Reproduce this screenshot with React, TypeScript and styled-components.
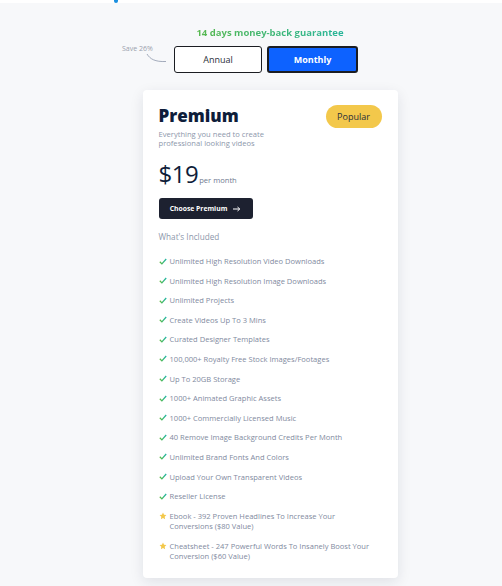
import React from "react";
import styled, { createGlobalStyle } from "styled-components";

const GlobalStyle = createGlobalStyle`
  body {
    margin: 0;
    background: #f7f8fa;
    font-family: "Open Sans", "Liberation Sans", sans-serif;
  }
`;

const TopStrip = styled.div`
  height: 3px;
  background: #ffffff;
  position: relative;
`;

const TopMark = styled.div`
  position: absolute;
  left: 114px;
  top: 0;
  width: 4px;
  height: 3px;
  background: #1a8fe0;
  border-radius: 0 0 2px 2px;
`;

const Page = styled.div`
  display: flex;
  flex-direction: column;
  align-items: center;
  padding: 24px 0 10px 38px;
`;

const Guarantee = styled.div`
  font-size: 9.5px;
  font-weight: 700;
  color: #3bb77e;
  background: linear-gradient(90deg, #58b84e, #27b59a);
  -webkit-background-clip: text;
  background-clip: text;
  -webkit-text-fill-color: transparent;
  line-height: 12px;
`;

const ToggleRow = styled.div`
  display: flex;
  gap: 5px;
  margin-top: 7px;
  margin-left: -8px;
  position: relative;
`;

const SaveNote = styled.div`
  position: absolute;
  left: -52px;
  top: -2px;
  font-size: 7px;
  color: #9aa1ad;
`;

const SaveArrow = styled.svg`
  position: absolute;
  left: -28px;
  top: 7px;
`;

const ToggleButton = styled.button<{ $active?: boolean }>`
  width: ${(p) => (p.$active ? "91px" : "88px")};
  height: 27px;
  border: ${(p) => (p.$active ? "2px solid #1b1d22" : "1px solid #1b1d22")};
  border-radius: 3px;
  background: ${(p) => (p.$active ? "#0d62ff" : "#ffffff")};
  color: ${(p) => (p.$active ? "#ffffff" : "#2a2f3a")};
  font-family: inherit;
  font-size: 9px;
  font-weight: ${(p) => (p.$active ? 700 : 500)};
  padding: 0;
`;

const Card = styled.div`
  width: 255px;
  box-sizing: border-box;
  margin-top: 17px;
  background: #ffffff;
  border-radius: 4px;
  box-shadow: 0 4px 14px rgba(20, 30, 60, 0.1);
  padding: 15px 16px 16px 16px;
`;

const CardHead = styled.div`
  display: flex;
  justify-content: space-between;
  align-items: flex-start;
`;

const PlanName = styled.div`
  font-size: 17px;
  font-weight: 800;
  color: #0e1d3a;
  line-height: 22px;
`;

const Badge = styled.div`
  background: #f3c84b;
  color: #2a2f3a;
  font-size: 9px;
  border-radius: 12px;
  width: 56px;
  height: 23px;
  display: flex;
  align-items: center;
  justify-content: center;
`;

const Description = styled.div`
  font-size: 7.6px;
  line-height: 8.5px;
  color: #8d97ab;
  width: 130px;
  margin-top: 2px;
`;

const PriceRow = styled.div`
  display: flex;
  align-items: baseline;
  margin-top: 14px;
  color: #0e1d3a;
`;

const Price = styled.span`
  font-size: 24px;
  line-height: 26px;
  letter-spacing: -0.5px;
`;

const Per = styled.span`
  font-size: 7.6px;
  color: #6f7a90;
  margin-left: 1px;
`;

const ChooseButton = styled.button`
  margin-top: 11px;
  width: 94px;
  height: 21px;
  border: none;
  border-radius: 3px;
  background: #1d2130;
  color: #ffffff;
  font-family: inherit;
  font-size: 6.8px;
  font-weight: 700;
  display: flex;
  align-items: center;
  justify-content: center;
  gap: 6px;
  padding: 0;
`;

const Included = styled.div`
  margin-top: 13px;
  font-size: 8.2px;
  color: #8d97ab;
  line-height: 10px;
`;

const List = styled.ul`
  list-style: none;
  margin: 14px 0 0 0;
  padding: 0;
  display: flex;
  flex-direction: column;
  gap: 9.1px;
`;

const Item = styled.li`
  display: flex;
  align-items: flex-start;
  gap: 3px;
  font-size: 7.55px;
  line-height: 10.5px;
  color: #7f8aa0;
`;

const IconBox = styled.span`
  flex: none;
  width: 8px;
  height: 10px;
  display: flex;
  align-items: center;
`;

const ItemText = styled.span<{ $wide?: boolean }>`
  max-width: ${(p) => (p.$wide ? "205px" : "none")};
`;

const Check = () => (
  <svg width="8" height="7" viewBox="0 0 8 7">
    <defs>
      <linearGradient id="chk" x1="0" x2="1" y1="0" y2="0">
        <stop offset="0" stopColor="#5dba3f" />
        <stop offset="1" stopColor="#1fb6a8" />
      </linearGradient>
    </defs>
    <path d="M0.8 3.8 L2.9 5.9 L7.2 1" fill="none" stroke="url(#chk)" strokeWidth="1.3" />
  </svg>
);

const Star = () => (
  <svg width="8" height="8" viewBox="0 0 24 24">
    <path
      d="M12 1.8l3.1 6.6 7.2.9-5.3 5 1.4 7.1L12 17.9l-6.4 3.5L7 14.3 1.7 9.3l7.2-.9z"
      fill="#f3c84b"
    />
  </svg>
);

const features = [
  "Unlimited High Resolution Video Downloads",
  "Unlimited High Resolution Image Downloads",
  "Unlimited Projects",
  "Create Videos Up To 3 Mins",
  "Curated Designer Templates",
  "100,000+ Royalty Free Stock Images/Footages",
  "Up To 20GB Storage",
  "1000+ Animated Graphic Assets",
  "1000+ Commercially Licensed Music",
  "40 Remove Image Background Credits Per Month",
  "Unlimited Brand Fonts And Colors",
  "Upload Your Own Transparent Videos",
  "Reseller License",
];

const bonuses = [
  "Ebook - 392 Proven Headlines To Increase Your Conversions ($80 Value)",
  "Cheatsheet - 247 Powerful Words To Insanely Boost Your Conversion ($60 Value)",
];

export default function App() {
  return (
    <>
      <GlobalStyle />
      <TopStrip>
        <TopMark />
      </TopStrip>
      <Page>
        <Guarantee>14 days money-back guarantee</Guarantee>
        <ToggleRow>
          <SaveNote>Save 26%</SaveNote>
          <SaveArrow width="24" height="12" viewBox="0 0 24 12">
            <path d="M1 1 C4 6 9 9 20 8.5" fill="none" stroke="#8d97ab" strokeWidth="0.8" />
          </SaveArrow>
          <ToggleButton>Annual</ToggleButton>
          <ToggleButton $active>Monthly</ToggleButton>
        </ToggleRow>
        <Card>
          <CardHead>
            <PlanName>Premium</PlanName>
            <Badge>Popular</Badge>
          </CardHead>
          <Description>Everything you need to create professional looking videos</Description>
          <PriceRow>
            <Price>$19</Price>
            <Per>per month</Per>
          </PriceRow>
          <ChooseButton>
            Choose Premium
            <svg width="8" height="6" viewBox="0 0 8 6">
              <path d="M0 3 H6.5 M4.5 1 L6.8 3 L4.5 5" fill="none" stroke="#fff" strokeWidth="1" />
            </svg>
          </ChooseButton>
          <Included>What's Included</Included>
          <List>
            {features.map((f) => (
              <Item key={f}>
                <IconBox>
                  <Check />
                </IconBox>
                <ItemText>{f}</ItemText>
              </Item>
            ))}
            {bonuses.map((b) => (
              <Item key={b}>
                <IconBox>
                  <Star />
                </IconBox>
                <ItemText $wide>{b}</ItemText>
              </Item>
            ))}
          </List>
        </Card>
      </Page>
    </>
  );
}
